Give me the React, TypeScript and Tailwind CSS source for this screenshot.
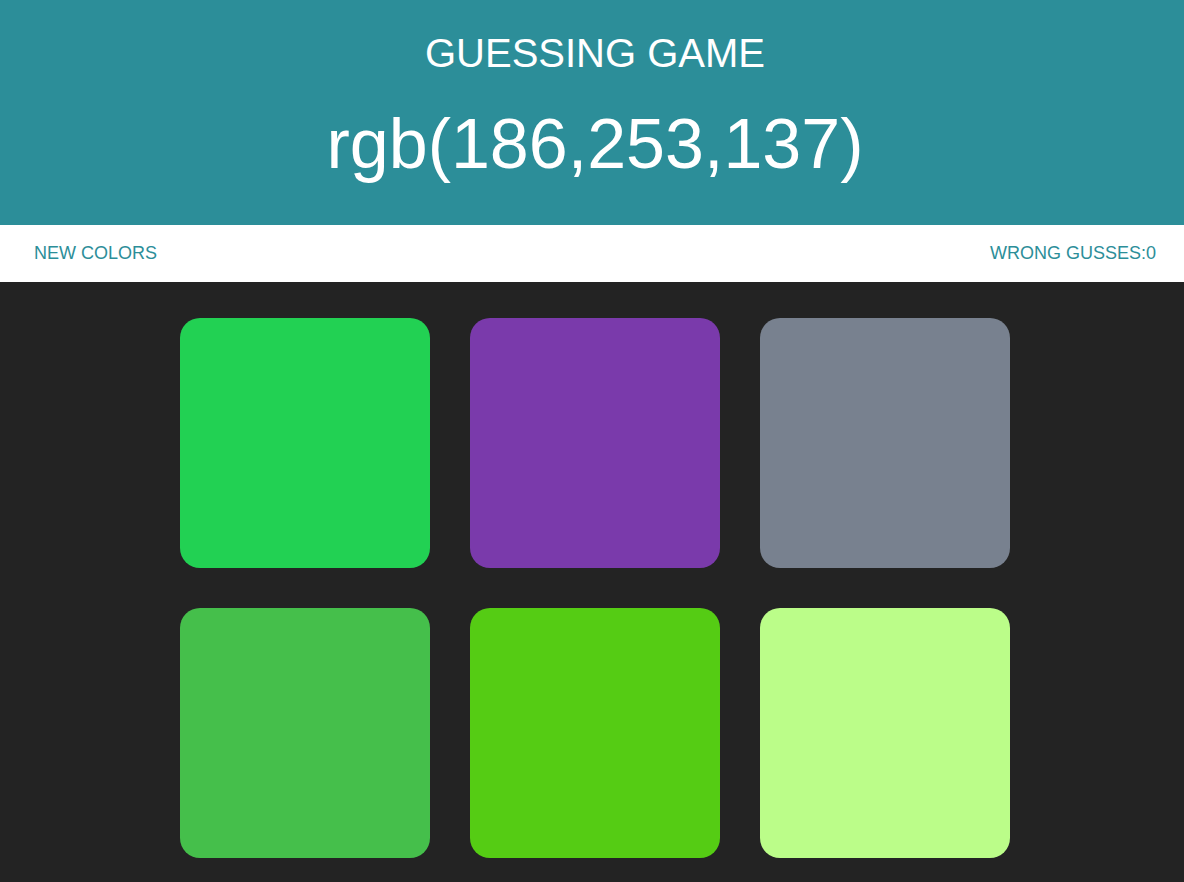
export default function App() {
  const colors = ["#22d153", "#7a3aab", "#78818f", "#45bf4b", "#55cc14", "#bbfd89"];
  return (
    <div className="min-h-[882px] bg-[#232323]" style={{ fontFamily: '"Liberation Sans", Arial, sans-serif' }}>
      <header className="h-[225px] bg-[#2c8e99] text-white flex flex-col items-center pl-[6px]">
        <h1 className="mt-[30px] text-[40px] leading-[46px] font-normal">GUESSING GAME</h1>
        <div className="mt-[28px] text-[70px] leading-[80px]">rgb(186,253,137)</div>
      </header>
      <div className="h-[57px] bg-white flex items-center justify-between pl-[34px] pr-[28px] text-[18px] text-[#2c8e99]">
        <button className="uppercase">NEW COLORS</button>
        <span>WRONG GUSSES:0</span>
      </div>
      <div className="pt-[36px] pb-[24px] ml-[180px] w-[830px] grid grid-cols-3 gap-[40px]">
        {colors.map((c) => (
          <div key={c} className="w-[250px] h-[250px] rounded-[20px]" style={{ backgroundColor: c }} />
        ))}
      </div>
    </div>
  );
}
